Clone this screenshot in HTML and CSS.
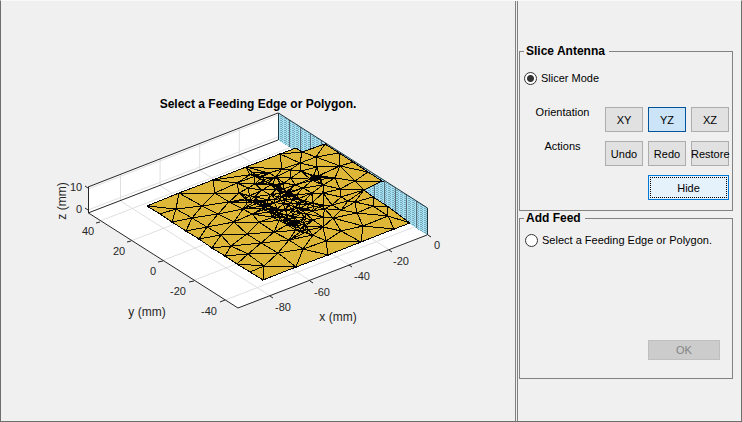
FILE: index.html
```
<!DOCTYPE html>
<html lang="en">
<head>
  <meta charset="UTF-8">
  <title>Slice Antenna</title>
  <link rel="stylesheet" href="styles.css">
</head>
<body>
  <div class="window">
    <main class="plotPane">
      <svg class="plot" viewBox="1 1 514 420" role="img" aria-label="Antenna mesh">
        <defs>
          <pattern id="hatch" width="4" height="2" patternUnits="userSpaceOnUse">
            <rect width="4" height="2" fill="#a6e0f2"/>
            <path d="M0 0h2v1h-2zM2 1h1v1h-1z" fill="#76a9ba"/>
          </pattern>
        </defs>
        <!-- walls and floor -->
        <path class="wall" d="M88 187L278 113V140L427 235L238 308L88 213z"/>
        <path id="grid" class="grid" d=""/>
        <!-- slicing plane -->
        <path class="plane" fill="url(#hatch)" d="M278 113L427 208V235L278 140z"/>
        <path id="planeLines" class="planeLines" d=""/>
        <path class="planeEdge" d="M278.5 140V113L427.5 208V235"/>
        <path class="axis" d="M278 113L88 187M278 140L88 213"/>
        <path class="axis" d="M88.5 187V213L238 308L427 235"/>
        <!-- ticks -->
        <path class="axis" d="M88 188l-3 -2M88 210l-3 -2M100 222l-4 1M131 241l-4 1M163 261l-5 1M194 281l-5 1M225 300l-5 2M270 296l3 2M310 281l3 2M349 265l3 2M389 250l3 2M428 235l3 2"/>
        <!-- antenna -->
        <path class="plate" d="M147 206L296 148L302 152L325 144L382 181L364 190L410 223L263 280z"/>
        <path id="mesh" class="mesh" d=""/>

        <text class="title" x="258" y="108">Select a Feeding Edge or Polygon.</text>
        <g class="tick">
          <text x="76" y="191">10</text>
          <text x="79" y="213">0</text>
          <text x="88" y="235">40</text>
          <text x="119" y="255">20</text>
          <text x="153" y="275">0</text>
          <text x="178" y="295">-20</text>
          <text x="209" y="315">-40</text>
          <text x="283" y="311">-80</text>
          <text x="322" y="296">-60</text>
          <text x="362" y="280">-40</text>
          <text x="401" y="265">-20</text>
          <text x="437" y="249">0</text>
        </g>
        <g class="axisName">
          <text x="338" y="321">x (mm)</text>
          <text x="147" y="316">y (mm)</text>
          <text transform="translate(66 201) rotate(-90)">z (mm)</text>
        </g>
      </svg>
    </main>

    <aside class="sidePane">
      <fieldset class="group">
        <legend>Slice Antenna</legend>
        <div class="radioRow first">
          <input type="radio" name="mode" id="slicer" checked>
          <label for="slicer">Slicer Mode</label>
        </div>
        <div class="controls">
          <span class="rowLabel">Orientation</span>
          <button type="button">XY</button>
          <button type="button" class="selected">YZ</button>
          <button type="button">XZ</button>
          <span class="rowLabel">Actions</span>
          <button type="button">Undo</button>
          <button type="button">Redo</button>
          <button type="button">Restore</button>
          <button type="button" class="hide">Hide</button>
        </div>
      </fieldset>
      <fieldset class="group">
        <legend>Add Feed</legend>
        <div class="radioRow">
          <input type="radio" name="mode" id="feed">
          <label for="feed">Select a Feeding Edge or Polygon.</label>
        </div>
        <div class="okRow">
          <button type="button" class="ok" disabled>OK</button>
        </div>
      </fieldset>
    </aside>
  </div>
  <script src="mesh.js"></script>
</body>
</html>
```
FILE: styles.css
```
* {
  box-sizing: border-box;
}
body {
  margin: 0;
  font-family: "Liberation Sans", Arial, sans-serif;
  font-size: 11px;
  color: #000;
  background: #f0f0f0;
}
.window {
  display: flex;
  min-height: 100vh;
  border: 1px solid #6e6e6e;
  border-top-color: #fafafa;
}
.plotPane {
  flex: 1;
  min-width: 0;
  display: flex;
}
.plot {
  display: block;
  width: 100%;
  height: auto;
}
.sidePane {
  width: 226px;
  padding: 43px 8px 0 1px;
  border-left: 3px double #808080;
}

/* plot */
.wall {
  fill: #fff;
}
.grid {
  fill: none;
  stroke: #dfdfdf;
}
.axis {
  fill: none;
  stroke: #262626;
}
.plane {
  shape-rendering: crispEdges;
}
.planeLines {
  stroke: #56707a;
  shape-rendering: crispEdges;
}
.planeEdge {
  fill: none;
  stroke: #1c343c;
}
.plate {
  fill: #deb738;
  shape-rendering: crispEdges;
}
.mesh {
  fill: none;
  stroke: #000;
  shape-rendering: crispEdges;
}
.title {
  font-size: 12px;
  font-weight: bold;
  text-anchor: middle;
}
.tick {
  font-size: 11px;
  fill: #262626;
  text-anchor: middle;
}
.axisName {
  font-size: 12px;
  fill: #262626;
  text-anchor: middle;
}

/* side panel */
.group {
  margin: 0;
  padding: 0 3px 10px 0;
  border: 1px solid #828282;
  min-width: 0;
}
.group legend {
  margin-left: 4px;
  padding: 0 4px 0 2px;
  font-size: 12px;
  font-weight: bold;
  line-height: 15px;
}
.radioRow {
  display: flex;
  align-items: center;
  gap: 4px;
  height: 14px;
  margin: 7px 0 0 5px;
}
.radioRow.first {
  margin: 12px 0 0 4px;
}
.radioRow input {
  appearance: none;
  flex: none;
  width: 13px;
  height: 13px;
  margin: 0;
  border: 1px solid #333;
  border-radius: 50%;
  background: #fff;
}
.radioRow input:checked {
  background: radial-gradient(circle, #333 3px, #fff 4px);
}
.controls {
  display: grid;
  grid-template-columns: 1fr 38px 38px 38px;
  grid-auto-rows: 25px;
  gap: 9px 5px;
  margin-top: 22px;
}
.rowLabel {
  padding-left: 5px;
  line-height: 10px;
  text-align: center;
}
button {
  padding: 0;
  border: 0;
  font: inherit;
  color: #000;
  white-space: nowrap;
  background: #e1e1e1;
  box-shadow: inset 0 0 0 1px #adadad;
}
button.selected {
  background: #cce4f7;
  box-shadow: inset 0 0 0 1px #005499;
}
button.hide {
  grid-column: 3 / 5;
  background: #e5f1fb;
  box-shadow: inset 0 0 0 1px #0078d7;
  outline: 1px dotted #000;
  outline-offset: -3px;
}
.okRow {
  display: flex;
  justify-content: flex-end;
  padding: 93px 9px 8px 0;
}
button.ok {
  width: 72px;
  height: 20px;
  color: #838383;
  background: #ccc;
  box-shadow: inset 0 0 0 1px #bfbfbf;
}
```
FILE: mesh.js
```
// grid lines of the walls and the floor
let grid = "";
for (let i = 0; i < 4; i++) {
  const x = 120.5 + i * 39.6;
  const y = 201 - i * 15.4;
  grid += `M${x} ${y - 27}V${y}L${x + 150} ${y + 95}`;
}
for (let i = 0; i < 5; i++) {
  grid += `M${100 + i * 31.2} ${221 + i * 19.8}l189 -73`;
}
grid += "M88 189L278 115M88 210L278 137";
document.getElementById("grid").setAttribute("d", grid);

let planeLines = "";
for (let x = 289; x < 424; x += 10.6) {
  const y = 113 + (x - 278) * 0.637;
  planeLines += `M${Math.round(x) + 0.5} ${y}v27`;
}
document.getElementById("planeLines").setAttribute("d", planeLines);

// outline of the plate
const outline = [
  [147, 206], [179, 193], [213, 180], [246, 167], [280, 154], [296, 148],
  [302, 152], [325, 144], [339, 153], [353, 162], [368, 172], [382, 181],
  [364, 190], [373, 197], [387, 206], [410, 223], [394, 229], [361, 242],
  [328, 255], [296, 267], [263, 280], [250, 272], [237, 264], [225, 256],
  [212, 248], [199, 239], [186, 231], [172, 222], [160, 214]
];

// inner nodes
const nodes = [
  [176, 209], [192, 218], [207, 227], [221, 235], [231, 246], [248, 254],
  [278, 253], [264, 266], [247, 234], [261, 243], [274, 232], [234, 222],
  [218, 214], [202, 206], [215, 193], [229, 202], [237, 183], [239, 193],
  [259, 222], [252, 214], [243, 209], [289, 240], [282, 169], [269, 173],
  [300, 163], [316, 157], [317, 167], [340, 166], [335, 178], [355, 181],
  [340, 189], [341, 197], [348, 201], [355, 202], [357, 213], [373, 206],
  [388, 216], [341, 210], [341, 231], [363, 226], [326, 241], [303, 249],
  [323, 185], [323, 193], [323, 206], [323, 217], [323, 227], [333, 218],
  [332, 205], [313, 235], [301, 171], [291, 178], [303, 188], [312, 193],
  [290, 170], [276, 177], [262, 190], [272, 195], [312, 211], [313, 220],
  [255, 184], [248, 188], [284, 183], [295, 185]
];

let seed = 7;
function random() {
  seed = (seed * 16807) % 2147483647;
  return seed / 2147483647;
}

// fine nodes around the slots
function addStrip(x1, y1, x2, y2, count, spread) {
  for (let i = 0; i < count; i++) {
    const t = i / (count - 1);
    nodes.push([
      x1 + (x2 - x1) * t + (random() - 0.5) * spread,
      y1 + (y2 - y1) * t + (random() - 0.5) * spread
    ]);
  }
}
addStrip(252, 173, 275, 187, 20, 4);
addStrip(274, 186, 306, 207, 44, 9);
addStrip(247, 198, 267, 206, 30, 7);
addStrip(265, 205, 306, 231, 80, 11);
addStrip(272, 197, 306, 218, 20, 8);
addStrip(311, 205, 324, 206, 8, 6);
addStrip(311, 178, 321, 178, 24, 5);

const points = outline.concat(nodes);

// screen -> plate plane, the triangles are built in plate coordinates
const flat = points.map(([x, y]) => {
  const det = 39.5 * -19.7 - -31.2 * -15.4;
  return [(x * -19.7 + y * 31.2) / det, (y * 39.5 + x * 15.4) / det];
});

function circle(a, b, c) {
  const [ax, ay] = flat[a], [bx, by] = flat[b], [cx, cy] = flat[c];
  const d = 2 * (ax * (by - cy) + bx * (cy - ay) + cx * (ay - by));
  const a2 = ax * ax + ay * ay, b2 = bx * bx + by * by, c2 = cx * cx + cy * cy;
  const x = (a2 * (by - cy) + b2 * (cy - ay) + c2 * (ay - by)) / d;
  const y = (a2 * (cx - bx) + b2 * (ax - cx) + c2 * (bx - ax)) / d;
  return { a, b, c, x, y, r: (ax - x) ** 2 + (ay - y) ** 2 };
}

// Bowyer-Watson
function triangulate() {
  const n = flat.length;
  flat.push([-1000, -1013], [1017, -1000], [11, 1500]);
  let triangles = [circle(n, n + 1, n + 2)];
  for (let i = 0; i < n; i++) {
    const edges = new Map();
    triangles = triangles.filter((t) => {
      const [x, y] = flat[i];
      if ((x - t.x) ** 2 + (y - t.y) ** 2 >= t.r) return true;
      [[t.a, t.b], [t.b, t.c], [t.c, t.a]].forEach(([p, q]) => {
        const key = Math.min(p, q) + "," + Math.max(p, q);
        if (edges.has(key)) edges.delete(key);
        else edges.set(key, [p, q]);
      });
      return false;
    });
    edges.forEach(([p, q]) => triangles.push(circle(p, q, i)));
  }
  return triangles.filter((t) => t.a < n && t.b < n && t.c < n);
}

function inside(x, y) {
  let hit = false;
  for (let i = 0, j = outline.length - 1; i < outline.length; j = i++) {
    const [x1, y1] = outline[i], [x2, y2] = outline[j];
    if ((y1 > y) !== (y2 > y) && x < (x2 - x1) * (y - y1) / (y2 - y1) + x1) hit = !hit;
  }
  return hit;
}

let mesh = "M" + outline.map((p) => p.join(" ")).join("L") + "z";
triangulate().forEach((t) => {
  const [a, b, c] = [points[t.a], points[t.b], points[t.c]];
  if (inside((a[0] + b[0] + c[0]) / 3, (a[1] + b[1] + c[1]) / 3)) {
    mesh += `M${a.join(" ")}L${b.join(" ")}L${c.join(" ")}z`;
  }
});
document.getElementById("mesh").setAttribute("d", mesh);
```
